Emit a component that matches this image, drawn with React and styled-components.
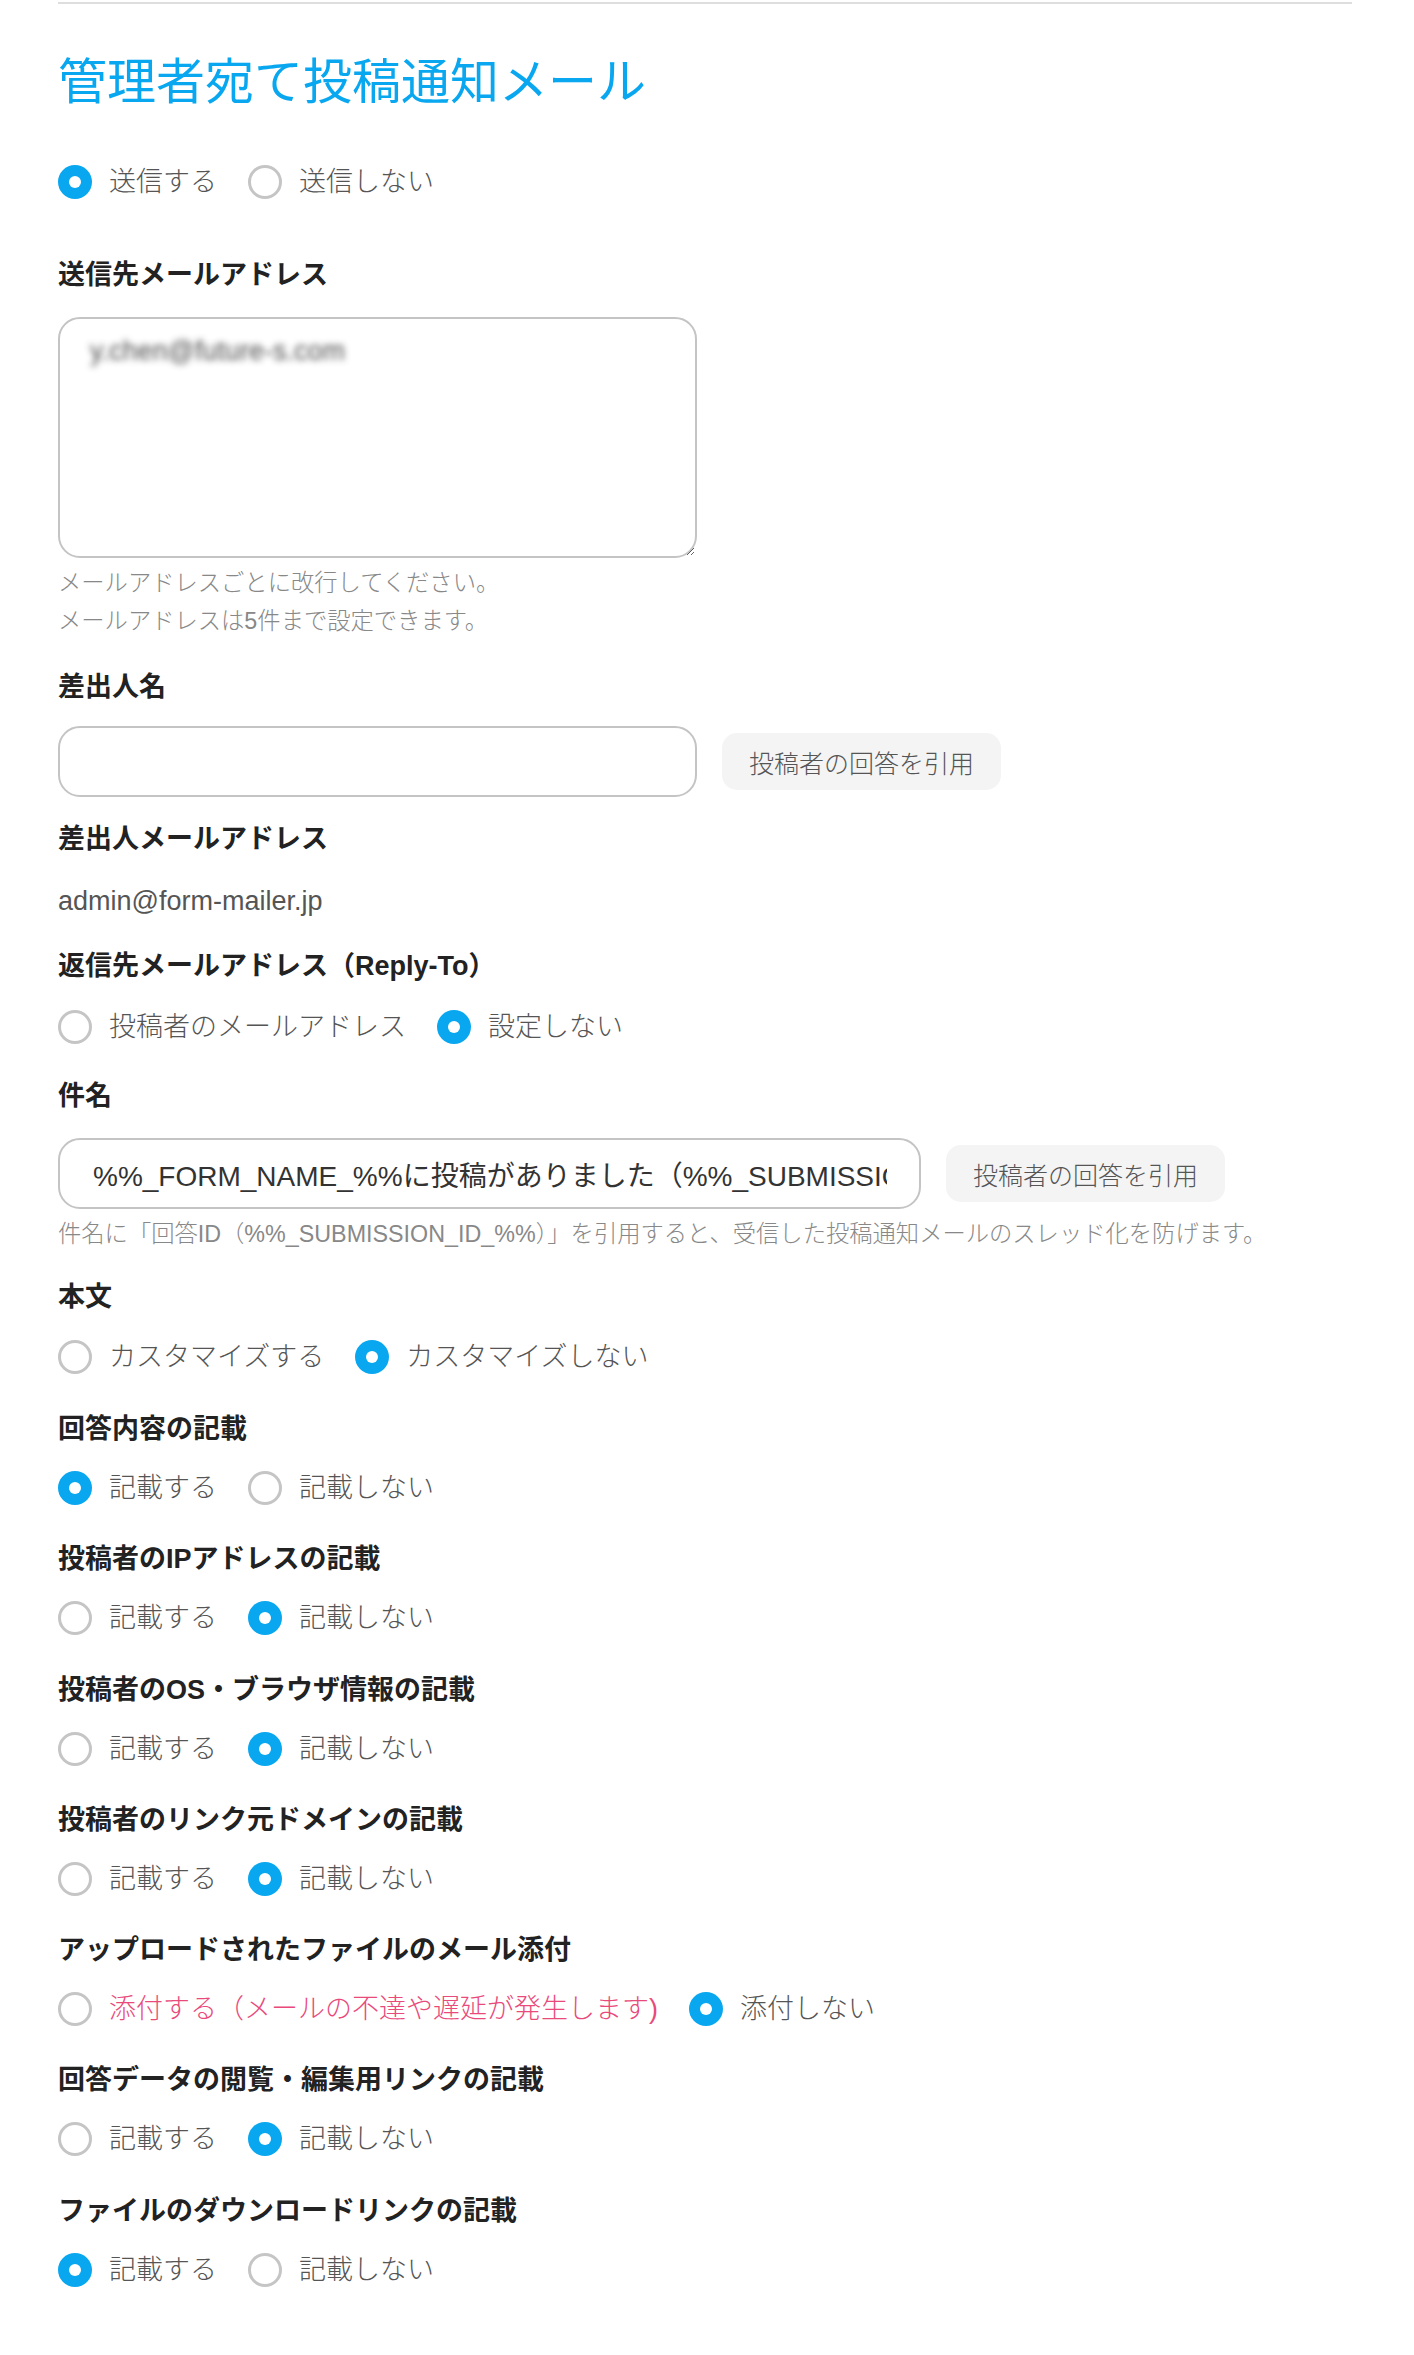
import React from "react";
import styled, { createGlobalStyle } from "styled-components";

const GlobalStyle = createGlobalStyle`
  html, body {
    margin: 0;
    padding: 0;
    background: #fff;
  }
  body {
    font-family: "Liberation Sans", "Noto Sans CJK JP", sans-serif;
    color: #333;
  }
  * {
    box-sizing: border-box;
  }
`;

const Page = styled.div`
  width: 1294px;
  margin-left: 58px;
  padding: 2px 0 60px;
`;

const Rule = styled.div`
  height: 2px;
  background: #dedede;
`;

const Title = styled.h1`
  margin: 48px 0 0;
  font-size: 49px;
  line-height: 60px;
  font-weight: 400;
  color: #08a7ef;
`;

const Section = styled.section`
  display: flex;
  flex-direction: column;
  align-items: flex-start;
  margin-top: ${(p) => p.$mt}px;
`;

const Label = styled.div`
  font-size: 27px;
  line-height: 40px;
  height: 40px;
  font-weight: 700;
  color: #222;
  margin-bottom: ${(p) => p.$gap ?? 22}px;
  white-space: nowrap;
`;

const RadioGroup = styled.div`
  display: flex;
  align-items: center;
  gap: 31px;
  height: 34px;
  margin-top: ${(p) => p.$mt || 0}px;
`;

const RadioOption = styled.label`
  display: flex;
  align-items: center;
  gap: 17px;
  cursor: pointer;
`;

const RadioMark = styled.span`
  width: 34px;
  height: 34px;
  border-radius: 50%;
  flex: none;
  display: flex;
  align-items: center;
  justify-content: center;
  border: ${(p) => (p.$checked ? "none" : "3px solid #c5c5c5")};
  background: ${(p) => (p.$checked ? "#08a7ef" : "#fff")};
  &::after {
    content: "";
    display: ${(p) => (p.$checked ? "block" : "none")};
    width: 12px;
    height: 12px;
    border-radius: 50%;
    background: #fff;
  }
`;

const OptionText = styled.span`
  font-size: 27px;
  line-height: 34px;
  font-weight: 300;
  color: ${(p) => (p.$danger ? "#e94a7b" : "#555")};
  white-space: nowrap;
`;

const AddressBox = styled.textarea`
  width: 639px;
  height: 241px;
  border: 2px solid #c4c4c4;
  border-radius: 22px;
  padding: 12px 30px;
  font-family: "Liberation Sans", "Noto Sans CJK JP", sans-serif;
  font-size: 27px;
  line-height: 40px;
  color: transparent;
  text-shadow: 0 0 6px rgba(60, 60, 60, 0.9);
  outline: none;
  resize: vertical;
`;

const Help = styled.div`
  margin-top: 6px;
  font-size: 23.3px;
  line-height: 38px;
  color: #888;
  font-weight: 300;
  white-space: nowrap;
`;

const InputRow = styled.div`
  display: flex;
  align-items: center;
  gap: 25px;
`;

const TextInput = styled.input`
  width: ${(p) => p.$width}px;
  height: 71px;
  border: 2px solid #c4c4c4;
  border-radius: 22px;
  padding: 0 32px 0 33px;
  font-family: "Liberation Sans", "Noto Sans CJK JP", sans-serif;
  font-size: 28px;
  color: #333;
  background: #fff;
  outline: none;
`;

const QuoteButton = styled.button`
  height: 57px;
  padding: 0 27px;
  border: none;
  border-radius: 15px;
  background: #f4f4f4;
  font-family: "Noto Sans CJK JP", sans-serif;
  font-size: 25px;
  font-weight: 300;
  color: #555;
  white-space: nowrap;
  cursor: pointer;
`;

const StaticValue = styled.div`
  font-size: 27px;
  line-height: 40px;
  color: #555;
`;

const Radios = ({ options, checked, mt }) => (
  <RadioGroup $mt={mt}>
    {options.map((o, i) => (
      <RadioOption key={i}>
        <RadioMark $checked={i === checked} />
        <OptionText $danger={o.danger}>{o.text}</OptionText>
      </RadioOption>
    ))}
  </RadioGroup>
);

const yesNo = [{ text: "記載する" }, { text: "記載しない" }];

const recordSections = [
  { label: "回答内容の記載", options: yesNo, checked: 0 },
  { label: "投稿者のIPアドレスの記載", options: yesNo, checked: 1 },
  { label: "投稿者のOS・ブラウザ情報の記載", options: yesNo, checked: 1 },
  { label: "投稿者のリンク元ドメインの記載", options: yesNo, checked: 1 },
  {
    label: "アップロードされたファイルのメール添付",
    options: [
      { text: "添付する（メールの不達や遅延が発生します)", danger: true },
      { text: "添付しない" },
    ],
    checked: 1,
  },
  { label: "回答データの閲覧・編集用リンクの記載", options: yesNo, checked: 1 },
  { label: "ファイルのダウンロードリンクの記載", options: yesNo, checked: 0 },
];

const App = () => {
  return (
    <>
      <GlobalStyle />
      <Page>
        <Rule />
        <Title>管理者宛て投稿通知メール</Title>
        <Radios
          mt={53}
          options={[{ text: "送信する" }, { text: "送信しない" }]}
          checked={0}
        />

        <Section $mt={56}>
          <Label>送信先メールアドレス</Label>
          <AddressBox defaultValue="y.chen@future-s.com" />
          <Help>
            メールアドレスごとに改行してください。
            <br />
            メールアドレスは5件まで設定できます。
          </Help>
        </Section>

        <Section $mt={27}>
          <Label $gap={19}>差出人名</Label>
          <InputRow>
            <TextInput $width={639} defaultValue="" />
            <QuoteButton>投稿者の回答を引用</QuoteButton>
          </InputRow>
        </Section>

        <Section $mt={22}>
          <Label>差出人メールアドレス</Label>
          <StaticValue>admin@form-mailer.jp</StaticValue>
        </Section>

        <Section $mt={25}>
          <Label $gap={24}>返信先メールアドレス（Reply-To）</Label>
          <Radios
            options={[{ text: "投稿者のメールアドレス" }, { text: "設定しない" }]}
            checked={1}
          />
        </Section>

        <Section $mt={32}>
          <Label>件名</Label>
          <InputRow>
            <TextInput
              $width={863}
              defaultValue="%%_FORM_NAME_%%に投稿がありました（%%_SUBMISSION_ID_%%）"
            />
            <QuoteButton>投稿者の回答を引用</QuoteButton>
          </InputRow>
          <Help>
            件名に「回答ID（%%_SUBMISSION_ID_%%）」を引用すると、受信した投稿通知メールのスレッド化を防げます。
          </Help>
        </Section>

        <Section $mt={24}>
          <Label $gap={23}>本文</Label>
          <Radios
            options={[{ text: "カスタマイズする" }, { text: "カスタマイズしない" }]}
            checked={1}
          />
        </Section>

        {recordSections.map((s, i) => (
          <Section key={s.label} $mt={i === 0 ? 35 : 34.3}>
            <Label>{s.label}</Label>
            <Radios options={s.options} checked={s.checked} />
          </Section>
        ))}
      </Page>
    </>
  );
};

export default App;
